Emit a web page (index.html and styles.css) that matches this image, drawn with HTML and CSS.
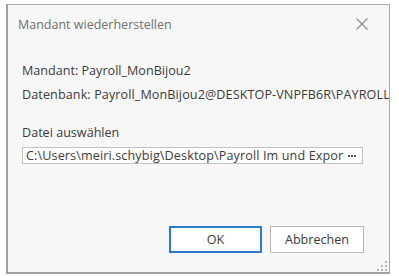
FILE: index.html
```html
<!DOCTYPE html>
<html>
<head>
<meta charset="utf-8">
<link rel="stylesheet" href="styles.css">
</head>
<body>
<div class="dialog">
  <div class="titlebar">
    <span class="title">Mandant wiederherstellen</span>
    <svg class="close" width="12" height="12" viewBox="0 0 12 12"><path d="M0.5 0.5 L11.5 11.5 M11.5 0.5 L0.5 11.5" stroke="#8a8a8a" stroke-width="1.1" fill="none"/></svg>
  </div>
  <div class="content">
    <div class="info">Mandant: Payroll_MonBijou2</div>
    <div class="info info2">Datenbank: Payroll_MonBijou2@DESKTOP-VNPFB6R\PAYROLL</div>
    <div class="label">Datei auswählen</div>
    <div class="input">
      <span class="path">C:\Users\meiri.schybig\Desktop\Payroll Im und Export</span>
      <svg class="dots" width="8" height="2" viewBox="0 0 8 2" fill="#555"><rect x="0" y="0" width="2" height="2"/><rect x="3" y="0" width="2" height="2"/><rect x="6" y="0" width="2" height="2"/></svg>
    </div>
  </div>
  <div class="buttons">
    <button class="btn primary">OK</button>
    <button class="btn">Abbrechen</button>
  </div>
  <svg class="grip" width="10" height="10" viewBox="0 0 10 10" fill="#b5b5b5"><rect x="8" y="0" width="2" height="2"/><rect x="4" y="4" width="2" height="2"/><rect x="8" y="4" width="2" height="2"/><rect x="0" y="8" width="2" height="2"/><rect x="4" y="8" width="2" height="2"/><rect x="8" y="8" width="2" height="2"/></svg>
</div>
</body>
</html>
```
FILE: styles.css
```css
html, body {
  margin: 0;
  padding: 0;
  background: #ffffff;
}
body {
  font-family: "Open Sans", "Noto Sans", sans-serif;
  font-size: 12.6px;
  color: #3c3c3c;
}
.dialog {
  position: relative;
  margin: 4px 0 0 6px;
  width: 381px;
  height: 267px;
  background: #f7f7f7;
  border: 1px solid #a9a9a9;
  border-left: 2px solid #a0a0a0;
  border-bottom: 2px solid #a0a0a0;
  display: flex;
  flex-direction: column;
  overflow: hidden;
}
.titlebar {
  display: flex;
  align-items: center;
  justify-content: space-between;
  height: 38px;
  padding: 0 21px 0 10px;
}
.title {
  color: #707070;
  font-size: 12.5px;
}
.close {
  display: block;
}
.content {
  padding: 19px 0 0 14px;
  display: flex;
  flex-direction: column;
}
.info {
  white-space: nowrap;
  line-height: 17px;
}
.info2 {
  margin-top: 7px;
  letter-spacing: 0.1px;
}
.label {
  margin-top: 21px;
  line-height: 17px;
}
.input {
  margin-top: 6px;
  width: 339px;
  height: 15px;
  background: #ffffff;
  border: 1px solid #c2c2c2;
  display: flex;
  align-items: center;
  overflow: hidden;
}
.path {
  flex: 1;
  white-space: nowrap;
  overflow: hidden;
  padding-left: 3px;
  color: #3c3c3c;
  line-height: 15px;
  letter-spacing: 0.12px;
}
.dots {
  display: block;
  margin: 1px 6px 0 4px;
}
.buttons {
  display: flex;
  justify-content: flex-end;
  gap: 8px;
  margin-top: auto;
  padding: 0 25px 19px 0;
}
.btn {
  font-family: "Open Sans", "Noto Sans", sans-serif;
  font-size: 12.6px;
  color: #3c3c3c;
  background: #ffffff;
  border: 1px solid #b8b8b8;
  width: 94px;
  height: 27px;
  padding: 0;
}
.btn.primary {
  width: 93px;
  border: 2px solid #2a7ad3;
}
.grip {
  position: absolute;
  right: 2px;
  bottom: 1px;
}
```
